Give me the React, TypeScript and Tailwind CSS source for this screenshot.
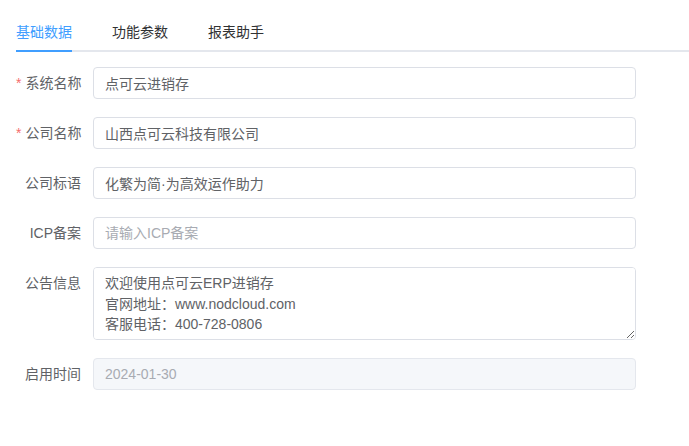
import React, { useState } from 'react';

const labelCls = 'w-[77px] shrink-0 whitespace-nowrap pr-3 text-right text-sm text-[#606266] leading-8';
const inputCls =
  'block w-[543px] h-8 rounded border border-[#dcdfe6] bg-white px-[11px] text-sm text-[#606266] outline-none placeholder:text-[#a8abb2]';

const App = () => {
  const [tab, setTab] = useState(0);
  const [form, setForm] = useState({
    name: '点可云进销存',
    company: '山西点可云科技有限公司',
    slogan: '化繁为简·为高效运作助力',
    icp: '',
    notice: '欢迎使用点可云ERP进销存\n官网地址：www.nodcloud.com\n客服电话：400-728-0806',
    start: '2024-01-30',
  });

  const handleChange = (event: React.ChangeEvent<HTMLInputElement | HTMLTextAreaElement>) => {
    const { name, value } = event.target;
    setForm({ ...form, [name]: value });
  };

  const tabs = ['基础数据', '功能参数', '报表助手'];

  return (
    <div
      className="min-h-screen bg-white pl-4 pt-3"
      style={{ fontFamily: '"Liberation Sans", "Noto Sans CJK SC", sans-serif' }}
    >
      {/* tabs */}
      <div className="relative flex h-10 border-b-2 border-[#e4e7ed]">
        {tabs.map((t, i) => (
          <button
            key={t}
            onClick={() => setTab(i)}
            className={`relative -mb-[2px] h-10 text-sm leading-10 ${i === 0 ? 'pr-5' : 'px-5'} ${
              tab === i ? 'text-[#409eff]' : 'text-[#303133]'
            }`}
          >
            {t}
            {tab === i && (
              <span
                className={`absolute bottom-0 h-[2px] bg-[#409eff] ${i === 0 ? 'left-0 right-5' : 'left-5 right-5'}`}
              />
            )}
          </button>
        ))}
      </div>

      <form className="mt-[15px] flex flex-col gap-[18px]">
        <div className="flex">
          <label className={labelCls}>
            <span className="mr-1 text-[#f56c6c]">*</span>系统名称
          </label>
          <input name="name" value={form.name} onChange={handleChange} className={inputCls} />
        </div>

        <div className="flex">
          <label className={labelCls}>
            <span className="mr-1 text-[#f56c6c]">*</span>公司名称
          </label>
          <input name="company" value={form.company} onChange={handleChange} className={inputCls} />
        </div>

        <div className="flex">
          <label className={labelCls}>公司标语</label>
          <input name="slogan" value={form.slogan} onChange={handleChange} className={inputCls} />
        </div>

        <div className="flex">
          <label className={labelCls}>ICP备案</label>
          <input
            name="icp"
            value={form.icp}
            onChange={handleChange}
            placeholder="请输入ICP备案"
            className={inputCls}
          />
        </div>

        <div className="flex">
          <label className={labelCls}>公告信息</label>
          <textarea
            name="notice"
            value={form.notice}
            onChange={handleChange}
            rows={3}
            className="block h-[73px] w-[543px] rounded border border-[#dcdfe6] bg-white px-[11px] py-[5px] text-sm leading-[20.5px] text-[#606266] outline-none"
          />
        </div>

        <div className="flex">
          <label className={labelCls}>启用时间</label>
          <input
            name="start"
            value={form.start}
            disabled
            className="block h-8 w-[543px] cursor-not-allowed rounded border border-[#e4e7ed] bg-[#f5f7fa] px-[11px] text-sm text-[#a8abb2] outline-none"
          />
        </div>
      </form>
    </div>
  );
};

export default App;
